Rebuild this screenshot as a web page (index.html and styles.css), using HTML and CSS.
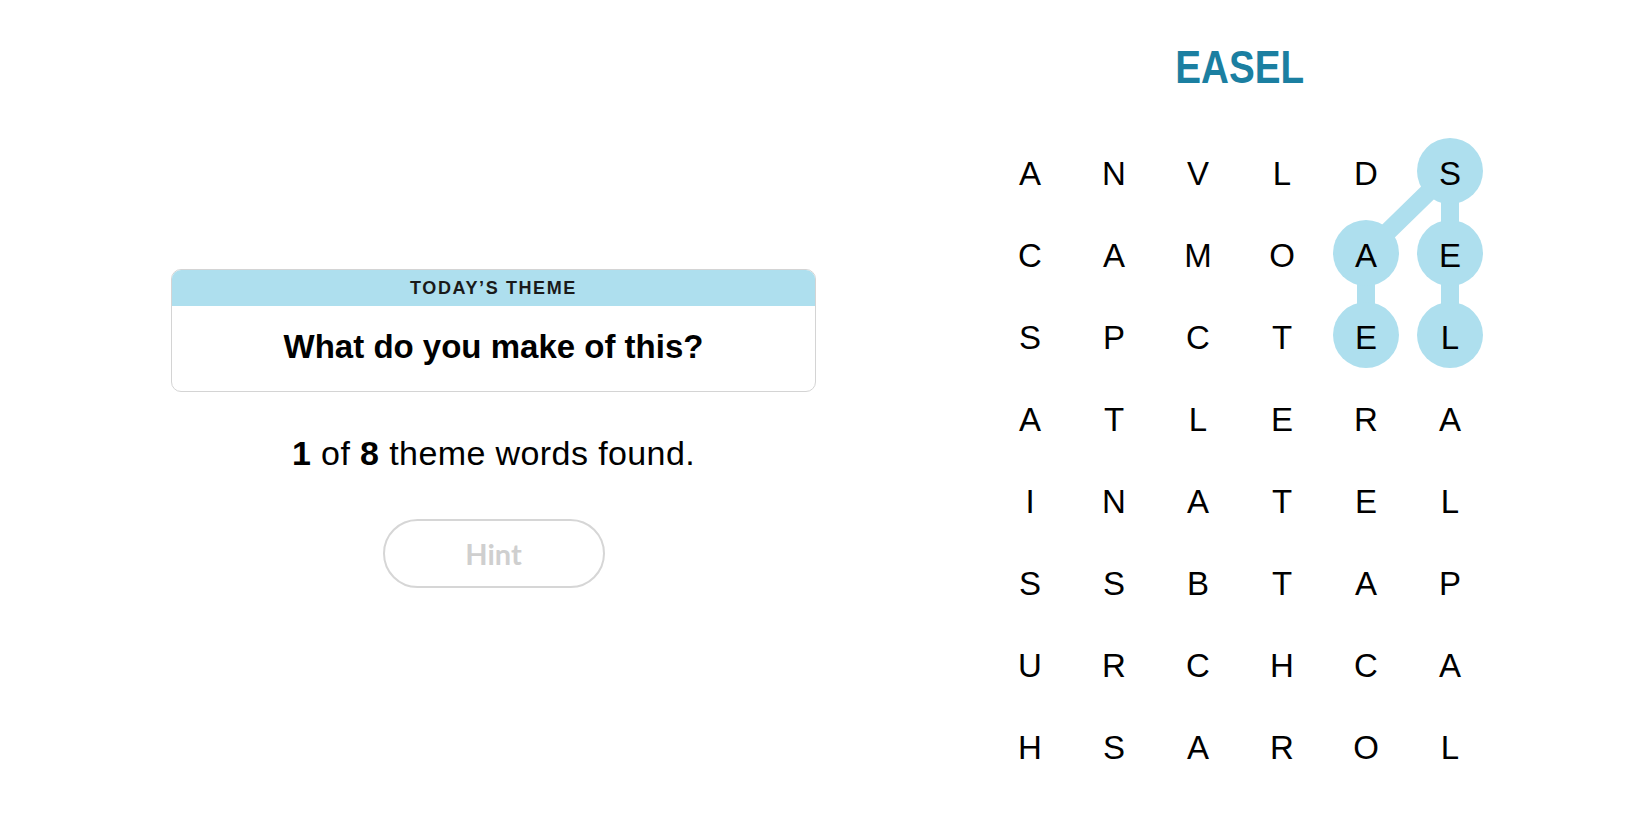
FILE: index.html
```html
<!DOCTYPE html>
<html lang="en">
<head>
<meta charset="utf-8">
<title>Strands</title>
<link rel="stylesheet" href="styles.css">
</head>
<body>
<div class="page">
  <section class="left">
    <div class="theme-card">
      <div class="theme-label">TODAY’S THEME</div>
      <div class="theme-text">What do you make of this?</div>
    </div>
    <p class="found"><b>1</b> of <b>8</b> theme words found.</p>
    <button class="hint" type="button">Hint</button>
  </section>
  <section class="right">
    <h1 class="word"><span>EASEL</span></h1>
    <div class="board">
      <svg class="trail" width="504" height="656" viewBox="0 0 504 656" aria-hidden="true">
        <polyline points="378,202 378,120 462,38 462,120 462,202" fill="none" stroke="#aedfee" stroke-width="18" stroke-linejoin="round"/>
        <circle cx="378" cy="202" r="33" fill="#aedfee"/>
        <circle cx="378" cy="120" r="33" fill="#aedfee"/>
        <circle cx="462" cy="38" r="33" fill="#aedfee"/>
        <circle cx="462" cy="120" r="33" fill="#aedfee"/>
        <circle cx="462" cy="202" r="33" fill="#aedfee"/>
      </svg>
      <div class="cells">
        <span>A</span><span>N</span><span>V</span><span>L</span><span>D</span><span>S</span>
        <span>C</span><span>A</span><span>M</span><span>O</span><span>A</span><span>E</span>
        <span>S</span><span>P</span><span>C</span><span>T</span><span>E</span><span>L</span>
        <span>A</span><span>T</span><span>L</span><span>E</span><span>R</span><span>A</span>
        <span>I</span><span>N</span><span>A</span><span>T</span><span>E</span><span>L</span>
        <span>S</span><span>S</span><span>B</span><span>T</span><span>A</span><span>P</span>
        <span>U</span><span>R</span><span>C</span><span>H</span><span>C</span><span>A</span>
        <span>H</span><span>S</span><span>A</span><span>R</span><span>O</span><span>L</span>
      </div>
    </div>
  </section>
</div>
</body>
</html>
```

FILE: styles.css
```css
* { box-sizing: border-box; }
html, body { margin: 0; padding: 0; background: #fff; }
body {
  font-family: "Liberation Sans", Arial, sans-serif;
  color: #000;
}
.page {
  display: flex;
  width: 1650px;
  height: 825px;
  overflow: hidden;
}
.left {
  width: 645px;
  margin-left: 171px;
  padding-top: 269px;
  display: flex;
  flex-direction: column;
  align-items: center;
}
.theme-card {
  width: 645px;
  border: 1px solid #d4d4d4;
  border-radius: 10px;
  overflow: hidden;
}
.theme-label {
  height: 36px;
  background: #aedfee;
  display: flex;
  align-items: center;
  justify-content: center;
  font-size: 18px;
  font-weight: 700;
  letter-spacing: 1.6px;
  color: #1a1a1a;
  padding-top: 1px;
}
.theme-text {
  height: 85px;
  display: flex;
  align-items: center;
  justify-content: center;
  font-size: 33px;
  font-weight: 700;
  padding-bottom: 4px;
}
.found {
  margin: 41px 0 0;
  font-size: 34px;
  letter-spacing: 0.4px;
  line-height: 40px;
  color: #000;
}
.found b { font-weight: 700; }
.hint {
  margin-top: 46px;
  width: 222px;
  height: 69px;
  border: 2px solid #d6d6d6;
  border-radius: 35px;
  background: #fff;
  font-family: Lato, "Liberation Sans", Arial, sans-serif;
  font-size: 29px;
  font-weight: 700;
  color: #cfcfcf;
  padding: 0;
}
.right {
  margin-left: 172px;
  width: 504px;
  padding-top: 39px;
  display: flex;
  flex-direction: column;
  align-items: center;
}
.word {
  margin: 0;
  height: 56px;
  font-size: 46px;
  line-height: 56px;
  font-weight: 700;
  color: #1b7fa1;
}
.word span {
  display: inline-block;
  transform: scaleX(0.84);
}
.board {
  position: relative;
  margin-top: 38px;
  width: 504px;
  height: 656px;
}
.trail {
  position: absolute;
  left: 0;
  top: 0;
}
.cells {
  position: relative;
  display: grid;
  grid-template-columns: repeat(6, 84px);
  grid-template-rows: repeat(8, 82px);
}
.cells span {
  display: flex;
  align-items: center;
  justify-content: center;
  font-size: 33px;
  line-height: 82px;
  color: #000;
}
```
